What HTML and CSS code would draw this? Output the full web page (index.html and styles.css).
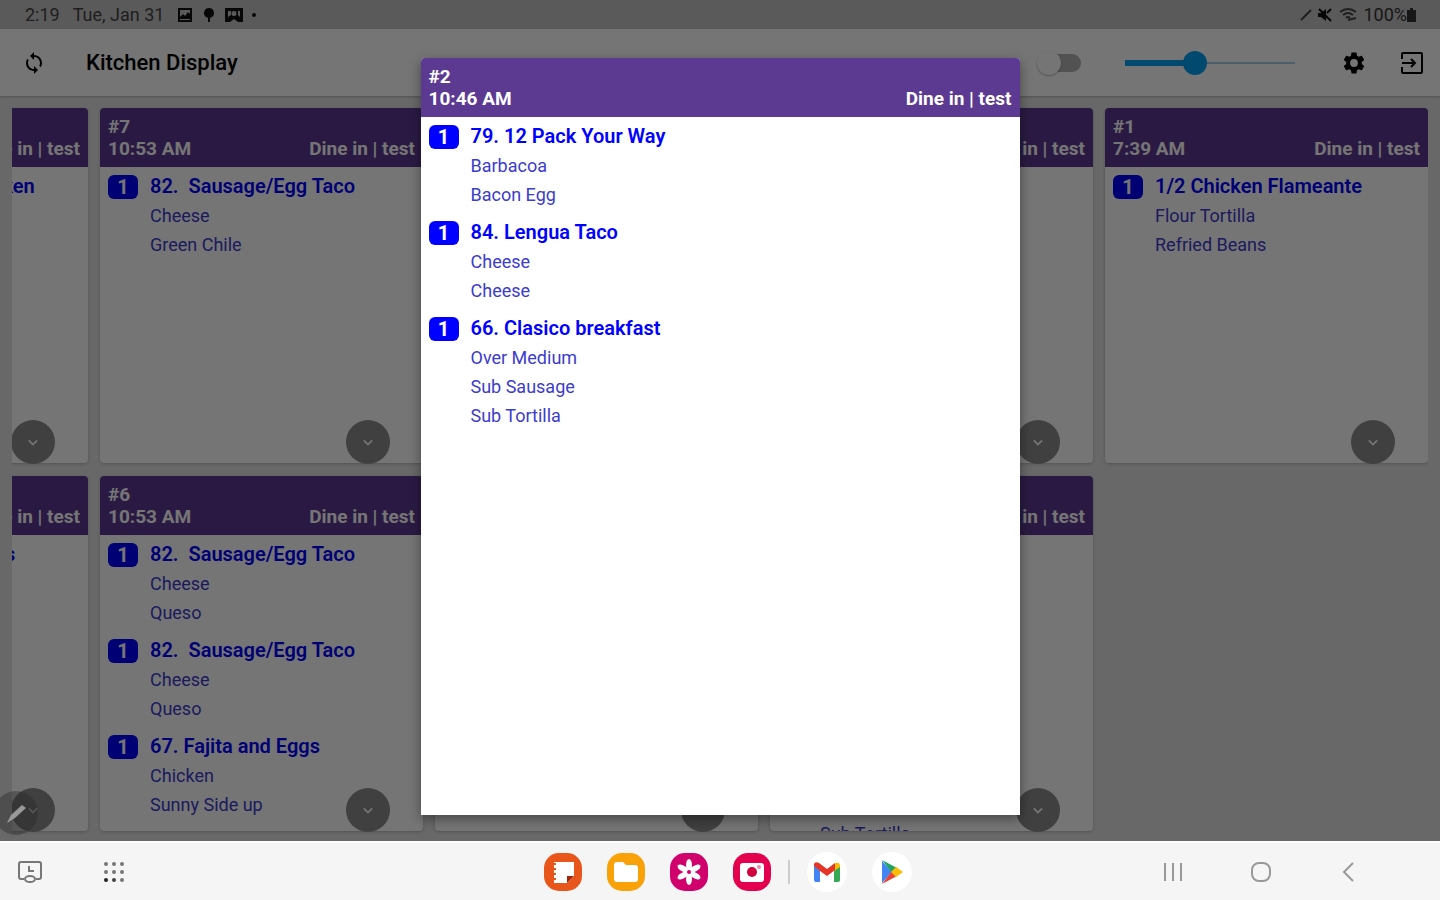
FILE: index.html
```html
<!DOCTYPE html>
<html lang="en">
<head>
    <meta charset="UTF-8">
    <meta name="viewport" content="width=device-width, initial-scale=1.0">
    <title>Kitchen Display</title>
    <link rel="stylesheet" href="styles.css">
</head>
<body>
    <!-- Shared icons -->
    <svg class="sprite" aria-hidden="true">
        <symbol id="chevron" viewBox="0 0 24 24"><path d="M7 10l5 5 5-5" fill="none" stroke="currentColor" stroke-width="2"/></symbol>
    </svg>

    <div class="screen">
        <div class="status-bar">
            <span>2:19</span>
            <span>Tue, Jan 31</span>
            <div class="status-icons">
                <svg width="16" height="16" viewBox="0 0 16 16"><path fill="currentColor" fill-rule="evenodd" d="M1 1h14v14H1zM3 3v7l3-3 2 2 3-4 2 2V3zM3 12v1h10v-1z"/></svg>
                <svg width="16" height="16" viewBox="0 0 16 16"><path fill="currentColor" d="M8 1a5 5 0 0 1 3 9l-2 1v4H7v-4l-2-1a5 5 0 0 1 3-9z"/></svg>
                <svg width="18" height="16" viewBox="0 0 18 16"><path fill="currentColor" fill-rule="evenodd" d="M0 1h18v14h-5l-4-3-4 3H0zM3 4v6l3-2V4zM9 4a2 2 0 1 0 0 5 2 2 0 1 0 0-5zM13 4v4l2 2V4z"/></svg>
                <svg width="6" height="16" viewBox="0 0 6 16"><circle cx="3" cy="8" r="2" fill="currentColor"/></svg>
            </div>
            <div class="status-right">
                <svg width="12" height="12" viewBox="0 0 12 12"><path d="M1 11L11 1" stroke="#444" stroke-width="2"/></svg>
                <svg width="16" height="16" viewBox="0 0 16 16"><path fill="currentColor" d="M1 6h3l5-4v12l-5-4H1z"/><path d="M2 2l12 12M10 6l4-4" stroke="currentColor" stroke-width="2"/></svg>
                <svg width="20" height="16" viewBox="0 0 20 16"><path d="M2 5q8-6 16 0M5 8q5-4 10 0M8 11q2-2 4 0M10 13l8-2" fill="none" stroke="#444" stroke-width="2"/></svg>
                <span class="battery">100%<svg width="9" height="14" viewBox="0 0 9 14"><path fill="currentColor" d="M3 0h3v2h3v12H0V2h3z"/></svg></span>
            </div>
        </div>

        <header class="app-bar">
            <button class="icon-button" aria-label="Sync">
                <svg width="24" height="24" viewBox="0 0 24 24"><path fill="currentColor" d="M12 4V1L8 5l4 4V6c3.31 0 6 2.69 6 6 0 1.01-.25 1.97-.7 2.8l1.46 1.46C19.54 15.03 20 13.57 20 12c0-4.42-3.58-8-8-8zm0 14c-3.31 0-6-2.69-6-6 0-1.01.25-1.97.7-2.8L5.24 7.74C4.46 8.97 4 10.43 4 12c0 4.42 3.58 8 8 8v3l4-4-4-4v3z"/></svg>
            </button>
            <h1>Kitchen Display</h1>
            <input type="checkbox" class="switch" aria-label="Sound">
            <input type="range" class="slider" min="0" max="100" value="40" aria-label="Volume">
            <button class="icon-button" aria-label="Settings">
                <svg width="26" height="26" viewBox="0 0 24 24"><path fill="currentColor" fill-rule="evenodd" d="M19.14 12.94c.04-.3.06-.61.06-.94 0-.32-.02-.64-.07-.94l2.03-1.58a.49.49 0 0 0 .12-.61l-1.92-3.32a.488.488 0 0 0-.59-.22l-2.39.96c-.5-.38-1.03-.7-1.62-.94l-.36-2.54a.484.484 0 0 0-.48-.41h-3.84c-.24 0-.43.17-.47.41l-.36 2.54c-.59.24-1.13.57-1.62.94l-2.39-.96c-.22-.08-.47 0-.59.22L2.74 8.87c-.12.21-.08.47.12.61l2.03 1.58c-.05.3-.09.63-.09.94s.02.64.07.94l-2.03 1.58a.49.49 0 0 0-.12.61l1.92 3.32c.12.22.37.29.59.22l2.39-.96c.5.38 1.03.7 1.62.94l.36 2.54c.05.24.24.41.48.41h3.84c.24 0 .44-.17.47-.41l.36-2.54c.59-.24 1.13-.56 1.62-.94l2.39.96c.22.08.47 0 .59-.22l1.92-3.32c.12-.22.07-.47-.12-.61l-2.01-1.58zM12 15.6a3.6 3.6 0 1 1 0-7.2 3.6 3.6 0 0 1 0 7.2z"/></svg>
            </button>
            <button class="icon-button" aria-label="Exit">
                <svg width="24" height="24" viewBox="0 0 24 24"><path d="M2 8V3q0-1 1-1h18q1 0 1 1v18q0 1-1 1H3q-1 0-1-1v-5M2 12h13M11 8l4 4-4 4" fill="none" stroke="currentColor" stroke-width="2"/></svg>
            </button>
        </header>

        <main class="board">
            <article class="ticket">
                <header class="ticket-header"><h2>#9</h2><p><span>10:54 AM</span><span>Dine in | test</span></p></header>
                <ul class="items">
                    <li><b class="qty">1</b><h3>66. Clasico with Chicken</h3></li>
                </ul>
                <button class="expand" aria-label="Expand"><svg width="20" height="20"><use href="#chevron"/></svg></button>
            </article>
            <article class="ticket">
                <header class="ticket-header"><h2>#8</h2><p><span>10:54 AM</span><span>Dine in | test</span></p></header>
                <ul class="items">
                    <li><b class="qty">1</b><h3>66. Clasico breakfasts</h3></li>
                </ul>
                <button class="expand" aria-label="Expand"><svg width="20" height="20"><use href="#chevron"/></svg></button>
            </article>
            <article class="ticket">
                <header class="ticket-header"><h2>#7</h2><p><span>10:53 AM</span><span>Dine in | test</span></p></header>
                <ul class="items">
                    <li><b class="qty">1</b><h3>82.&nbsp; Sausage/Egg Taco</h3><p>Cheese</p><p>Green Chile</p></li>
                </ul>
                <button class="expand" aria-label="Expand"><svg width="20" height="20"><use href="#chevron"/></svg></button>
            </article>
            <article class="ticket">
                <header class="ticket-header"><h2>#6</h2><p><span>10:53 AM</span><span>Dine in | test</span></p></header>
                <ul class="items">
                    <li><b class="qty">1</b><h3>82.&nbsp; Sausage/Egg Taco</h3><p>Cheese</p><p>Queso</p></li>
                    <li><b class="qty">1</b><h3>82.&nbsp; Sausage/Egg Taco</h3><p>Cheese</p><p>Queso</p></li>
                    <li><b class="qty">1</b><h3>67. Fajita and Eggs</h3><p>Chicken</p><p>Sunny Side up</p></li>
                </ul>
                <button class="expand" aria-label="Expand"><svg width="20" height="20"><use href="#chevron"/></svg></button>
            </article>
            <article class="ticket">
                <header class="ticket-header"></header>
                <ul class="items"></ul>
                <button class="expand" aria-label="Expand"><svg width="20" height="20"><use href="#chevron"/></svg></button>
            </article>
            <article class="ticket">
                <header class="ticket-header"></header>
                <ul class="items"></ul>
                <button class="expand" aria-label="Expand"><svg width="20" height="20"><use href="#chevron"/></svg></button>
            </article>
            <article class="ticket">
                <header class="ticket-header"><h2>#3</h2><p><span>10:48 AM</span><span>Dine in | test</span></p></header>
                <ul class="items"></ul>
                <button class="expand" aria-label="Expand"><svg width="20" height="20"><use href="#chevron"/></svg></button>
            </article>
            <article class="ticket">
                <header class="ticket-header"><h2>#2</h2><p><span>10:46 AM</span><span>Dine in | test</span></p></header>
                <ul class="items">
                    <li><b class="qty">1</b><h3>79. 12 Pack Your Way</h3><p>Barbacoa</p><p>Bacon Egg</p></li>
                    <li><b class="qty">1</b><h3>84. Lengua Taco</h3><p>Cheese</p><p>Cheese</p></li>
                    <li><b class="qty">1</b><h3>66. Clasico breakfast</h3><p>Over Medium</p><p>Sub Sausage</p><p>Sub Tortilla</p></li>
                </ul>
                <button class="expand" aria-label="Expand"><svg width="20" height="20"><use href="#chevron"/></svg></button>
            </article>
            <article class="ticket">
                <header class="ticket-header"><h2>#1</h2><p><span>7:39 AM</span><span>Dine in | test</span></p></header>
                <ul class="items">
                    <li><b class="qty">1</b><h3>1/2 Chicken Flameante</h3><p>Flour Tortilla</p><p>Refried Beans</p></li>
                </ul>
                <button class="expand" aria-label="Expand"><svg width="20" height="20"><use href="#chevron"/></svg></button>
            </article>
        </main>

        <!-- Opened ticket -->
        <div class="overlay">
            <section class="modal" role="dialog" aria-label="Order #2">
                <header class="ticket-header"><h2>#2</h2><p><span>10:46 AM</span><span>Dine in | test</span></p></header>
                <ul class="items">
                    <li><b class="qty">1</b><h3>79. 12 Pack Your Way</h3><p>Barbacoa</p><p>Bacon Egg</p></li>
                    <li><b class="qty">1</b><h3>84. Lengua Taco</h3><p>Cheese</p><p>Cheese</p></li>
                    <li><b class="qty">1</b><h3>66. Clasico breakfast</h3><p>Over Medium</p><p>Sub Sausage</p><p>Sub Tortilla</p></li>
                </ul>
            </section>
        </div>

        <button class="pen" aria-label="Pen menu">
            <svg width="44" height="44" viewBox="0 0 44 44"><path d="M13 32l4-8 11-10 4 3-11 10z" fill="#999"/></svg>
        </button>
    </div>

    <nav class="nav-bar">
        <div class="nav-left">
            <button class="icon-button" aria-label="Recent screen">
                <svg width="26" height="26" viewBox="0 0 26 26" fill="none" stroke="#777" stroke-width="2"><path d="M7 20H4q-2 0-2-2V5q0-2 2-2h18q2 0 2 2v13q0 2-2 2h-3M12 7v5h5"/><ellipse cx="13" cy="20" rx="5" ry="3"/></svg>
            </button>
            <button class="icon-button" aria-label="Apps">
                <svg width="24" height="24" viewBox="0 0 24 24" fill="#777"><circle cx="4" cy="4" r="2"/><circle cx="12" cy="4" r="2"/><circle cx="20" cy="4" r="2"/><circle cx="4" cy="12" r="2"/><circle cx="12" cy="12" r="2"/><circle cx="20" cy="12" r="2"/><circle cx="4" cy="20" r="2" fill="#222"/><circle cx="12" cy="20" r="2" fill="#444"/><circle cx="20" cy="20" r="2"/></svg>
            </button>
        </div>
        <div class="nav-apps">
            <button class="icon-button" aria-label="Notes">
                <svg width="38" height="38" viewBox="0 0 38 38"><rect width="38" height="38" rx="15" fill="#e8561c"/><path d="M10 9h20v14l-7 7H10z" fill="#fff"/><path d="M23 30v-7h7z" fill="#a3260c"/><path d="M8 11h4M8 16h4M8 21h4M8 26h4" stroke="#e8561c" stroke-width="2"/></svg>
            </button>
            <button class="icon-button" aria-label="My Files">
                <svg width="38" height="38" viewBox="0 0 38 38"><rect width="38" height="38" rx="15" fill="#f9a109"/><path d="M7 12q0-3 3-3h6l3 3h9q3 0 3 3v11q0 3-3 3H10q-3 0-3-3z" fill="#fff"/></svg>
            </button>
            <button class="icon-button" aria-label="Gallery">
                <svg width="38" height="38" viewBox="0 0 38 38"><rect width="38" height="38" rx="15" fill="#d0006c"/><g fill="#fff"><ellipse cx="19" cy="12" rx="3" ry="6"/><ellipse cx="19" cy="26" rx="3" ry="6"/><ellipse cx="19" cy="12" rx="3" ry="6" transform="rotate(60 19 19)"/><ellipse cx="19" cy="26" rx="3" ry="6" transform="rotate(60 19 19)"/><ellipse cx="19" cy="12" rx="3" ry="6" transform="rotate(-60 19 19)"/><ellipse cx="19" cy="26" rx="3" ry="6" transform="rotate(-60 19 19)"/></g><circle cx="19" cy="19" r="2" fill="#d0006c"/></svg>
            </button>
            <button class="icon-button" aria-label="Camera">
                <svg width="38" height="38" viewBox="0 0 38 38"><rect width="38" height="38" rx="15" fill="#e2004f"/><rect x="7" y="10" width="24" height="19" rx="3" fill="#fff"/><circle cx="19" cy="19" r="5" fill="#d3003f"/><circle cx="26" cy="14" r="2" fill="#f08aa6"/></svg>
            </button>
            <span class="divider"></span>
            <button class="icon-button app-round" aria-label="Gmail">
                <svg width="28" height="22" viewBox="0 0 28 22"><path d="M1 4v15q0 2 2 2h4V8z" fill="#4285f4"/><path d="M21 8v13h4q2 0 2-2V4z" fill="#34a853"/><path d="M21 3v7l6-4V4q-1-4-6-1z" fill="#fbbc04"/><path d="M1 3q1-3 5-1l8 6 8-6v7l-8 6-7-5-6-5z" fill="#e53526"/></svg>
            </button>
            <button class="icon-button app-round" aria-label="Play Store">
                <svg width="22" height="24" viewBox="0 0 22 24"><path d="M1 1v22l10-11z" fill="#4285f4"/><path d="M1 0l15 8-5 5z" fill="#1fa463"/><path d="M1 24l15-8-5-5z" fill="#ea4335"/><path d="M15 7l7 5-7 5-5-5z" fill="#fbbc04"/></svg>
            </button>
        </div>
        <div class="nav-right">
            <button class="icon-button" aria-label="Recents">
                <svg width="24" height="24" viewBox="0 0 24 24"><path d="M4 3v18M12 3v18M20 3v18" stroke="#999" stroke-width="2"/></svg>
            </button>
            <button class="icon-button" aria-label="Home">
                <svg width="24" height="24" viewBox="0 0 24 24"><rect x="3" y="3" width="18" height="18" rx="7" fill="none" stroke="#999" stroke-width="2"/></svg>
            </button>
            <button class="icon-button" aria-label="Back">
                <svg width="24" height="24" viewBox="0 0 24 24"><path d="M16 3l-9 9 9 9" fill="none" stroke="#999" stroke-width="2"/></svg>
            </button>
        </div>
    </nav>
</body>
</html>
```
FILE: styles.css
```css
* {
    box-sizing: border-box;
}

body {
    margin: 0;
    height: 100vh;
    display: flex;
    flex-direction: column;
    overflow: hidden;
    font-family: Roboto, "Liberation Sans", sans-serif;
    background-color: #f5f5f5;
    color: #000;
}

h1, h2, h3, p, ul {
    margin: 0;
    padding: 0;
}

button {
    font: inherit;
    color: inherit;
    border: none;
    padding: 0;
    cursor: pointer;
}

svg {
    display: block;
}

.sprite {
    position: absolute;
    width: 0;
    height: 0;
}

.screen {
    position: relative;
    flex: 1;
    min-height: 0;
    display: flex;
    flex-direction: column;
    background-color: #e2e2e2;
}

/* Status bar */
.status-bar {
    display: flex;
    align-items: center;
    gap: 13px;
    height: 29px;
    padding: 0 24px 0 25px;
    background-color: #c4c4c4;
    font-size: 18px;
    color: #444;
}

.status-icons, .status-right, .battery {
    display: flex;
    align-items: center;
}

.status-icons {
    gap: 8px;
    color: #111;
}

.status-right {
    gap: 5px;
    margin-left: auto;
    color: #111;
}

.battery {
    color: #333;
}

/* App bar */
.app-bar {
    display: flex;
    align-items: center;
    height: 67px;
    padding: 0 16px 0 22px;
    background-color: #fff;
    box-shadow: 0 1px 2px rgba(0, 0, 0, 0.2);
}

.app-bar h1 {
    margin-left: 40px;
    margin-right: auto;
    font-size: 22px;
    font-weight: 500;
}

.app-bar .icon-button + .icon-button {
    margin-left: 33px;
}

.icon-button {
    background: none;
}

.switch {
    appearance: none;
    display: flex;
    align-items: center;
    width: 36px;
    height: 18px;
    margin: 0 44px 0 0;
    border-radius: 9px;
    background-color: #b2b2b2;
}

.switch::before {
    content: "";
    flex: none;
    width: 24px;
    height: 24px;
    margin-left: -8px;
    border-radius: 50%;
    background-color: #fff;
    box-shadow: 0 1px 2px rgba(0, 0, 0, 0.3);
}

.slider {
    appearance: none;
    width: 170px;
    height: 24px;
    margin: 0 46px 0 0;
    background: linear-gradient(#03a0f0, #03a0f0) left center / 41% 6px no-repeat,
                linear-gradient(#a4cfe8, #a4cfe8) left center / 100% 2px no-repeat;
}

.slider::-webkit-slider-thumb {
    appearance: none;
    width: 24px;
    height: 24px;
    border-radius: 50%;
    background-color: #03a0f0;
}

/* Tickets, the first column runs off the left side */
.board {
    flex: 1;
    min-height: 0;
    display: grid;
    grid-auto-flow: column;
    grid-auto-columns: calc(25% - 31px);
    grid-template-rows: 1fr 1fr;
    gap: 13px 12px;
    justify-content: end;
    margin: 0 12px;
    padding: 12px 0 10px;
    overflow: hidden;
}

.ticket {
    position: relative;
    min-height: 0;
    display: flex;
    flex-direction: column;
    border-radius: 4px;
    background-color: #fff;
    box-shadow: 0 1px 3px rgba(0, 0, 0, 0.2);
}

.ticket-header {
    padding: 8px 8px 7px;
    border-radius: 4px 4px 0 0;
    background-color: #5c3a92;
    color: #fff;
    font-size: 19px;
    font-weight: 700;
    line-height: 22px;
}

.ticket-header h2 {
    font-size: 19px;
}

.ticket-header p {
    display: flex;
    justify-content: space-between;
}

.items {
    flex: 1;
    min-height: 0;
    display: flex;
    flex-direction: column;
    gap: 9px;
    padding: 5px 8px 0;
    overflow: hidden;
    list-style: none;
    color: #0000ff;
    line-height: 29px;
}

.items li {
    display: grid;
    grid-template-columns: 30px 1fr;
    column-gap: 12px;
    align-items: center;
}

.items h3 {
    font-size: 20px;
    font-weight: 600;
    white-space: nowrap;
}

.items p {
    grid-column: 2;
    font-size: 18px;
    color: #3c3ccd;
}

.qty {
    height: 24px;
    border-radius: 6px;
    background-color: #0000ff;
    color: #fff;
    font-size: 20px;
    line-height: 24px;
    text-align: center;
}

.expand {
    position: absolute;
    right: 33px;
    bottom: -1px;
    display: grid;
    place-items: center;
    width: 44px;
    height: 44px;
    border-radius: 50%;
    background-color: #8c8c8c;
    color: #fff;
}

/* Overlay with the opened ticket */
.overlay {
    position: absolute;
    inset: 0;
    display: flex;
    justify-content: center;
    padding: 58px 0 26px;
    background-color: rgba(0, 0, 0, 0.54);
}

.modal {
    width: 42%;
    max-width: 599px;
    display: flex;
    flex-direction: column;
    border-radius: 4px 4px 0 0;
    background-color: #fff;
    box-shadow: 0 4px 12px rgba(0, 0, 0, 0.4);
}

.pen {
    position: absolute;
    left: -6px;
    bottom: 6px;
    border-radius: 50%;
    background-color: rgba(40, 40, 40, 0.4);
}

/* System navigation */
.nav-bar {
    display: grid;
    grid-template-columns: 1fr auto 1fr;
    align-items: center;
    height: 59px;
    padding: 0 1px 0 17px;
    border-top: 2px solid #fff;
}

.nav-left, .nav-apps, .nav-right {
    display: flex;
    align-items: center;
}

.nav-left {
    gap: 59px;
}

.nav-apps {
    gap: 25px;
}

.divider {
    width: 2px;
    height: 24px;
    margin: 0 -8px;
    background-color: #ccc;
}

.app-round {
    display: grid;
    place-items: center;
    width: 40px;
    height: 40px;
    border-radius: 50%;
    background-color: #fff;
}

.nav-right {
    justify-content: flex-end;
    gap: 64px;
    padding-right: 78px;
}
```
